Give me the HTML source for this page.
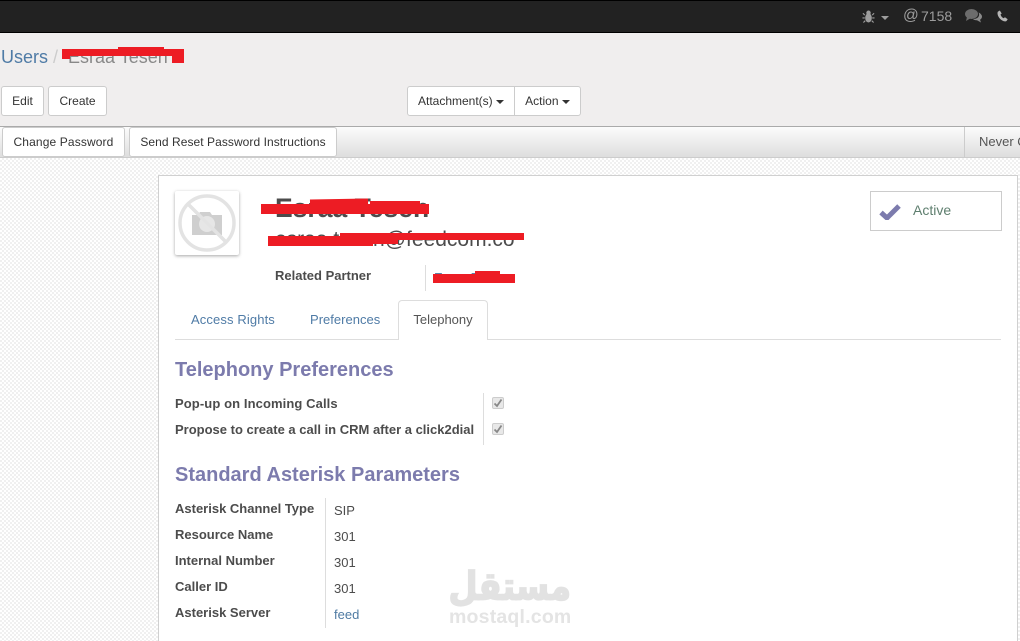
<!DOCTYPE html>
<html><head><meta charset="utf-8">
<style>
html,body{margin:0;padding:0;width:1020px;height:641px;overflow:hidden;background:#f0eeee}
body{position:relative;font-family:"Liberation Sans",Arial,sans-serif;font-size:12px;color:#4c4c4c}
.a{position:absolute;white-space:nowrap}
.btn{position:absolute;box-sizing:border-box;background:#fff;border:1px solid #ccc;height:30px;line-height:28px;text-align:center;font-size:12px;color:#333;border-radius:3px}
.car{display:inline-block;border-left:4px solid transparent;border-right:4px solid transparent;border-top:4px solid currentColor;vertical-align:middle;margin-left:0}
.lbl{position:absolute;left:175px;font-weight:bold;font-size:13px;color:#4c4c4c;white-space:nowrap;line-height:16px}
.val{position:absolute;left:334px;font-size:13px;color:#4c4c4c;line-height:16px}
.h{position:absolute;left:175px;font-weight:bold;font-size:20px;color:#7c7bad;white-space:nowrap;line-height:24px}
.red{position:absolute;background:#ed1c24}
.vl{position:absolute;width:1px;background:#ddd}
.cb{position:absolute;left:492px;width:10px;height:10px;border:1px solid #ccc;background:#e8e8e8;border-radius:2px}
</style></head><body>
<div class="a" style="left:0;top:0;width:1020px;height:33px;box-sizing:border-box;background:#222;border-top:1px solid #000;border-bottom:1px solid #000"></div>

<svg class="a" style="left:862px;top:9px" width="13" height="15" viewBox="0 0 14 15"><g fill="#9d9d9d" stroke="#9d9d9d"><ellipse cx="7" cy="9" rx="3.6" ry="5" stroke="none"/><circle cx="7" cy="3.5" r="2.4" stroke="none"/><path d="M3 6 1 4M11 6l2-2M3 9H0.5M11 9h2.5M3.5 12 1.5 14M10.5 12l2 2" fill="none" stroke-width="1.2"/></g></svg>
<div class="a" style="left:881px;top:16px;color:#9d9d9d"><span class="car" style="display:block;margin:0"></span></div>
<div class="a" style="left:903px;top:6px;font-size:15.500px;color:#9d9d9d;line-height:19px">@</div>
<div class="a" style="left:921px;top:8px;font-size:14px;color:#9d9d9d;line-height:17px">7158</div>
<svg class="a" style="left:965px;top:9px" width="17" height="14" viewBox="0 0 17 14"><ellipse cx="6.5" cy="5" rx="6.5" ry="5" fill="#6c6c6c"/><path d="M2 8 1 12l5-3z" fill="#6c6c6c"/><path d="M13.6 3.500C15.600 4.500 17 6 17 7.500c0 1.500-1 2.700-2 3.300l1 2.700-4-2.200c-1.500 0-3-.4-4-1.300 4 .2 7.500-2.500 5.600-6.500z" fill="#8a8a8a"/></svg>
<svg class="a" style="left:997px;top:10px" width="11" height="12" viewBox="0 0 11 12"><path d="M2.800.5.800 1.800C-.2 4 1.500 7.500 3.500 9.300c2 1.800 4.500 2.700 6 1.700l1.200-1.800-2.700-2-1.500 1C5 7.500 3.800 5.800 3.500 4.500l1.200-1z" fill="#b5b5b5"/></svg>

<div class="a" style="left:1px;top:45px;font-size:18px;line-height:24px;color:#4f7ba6">Users</div>
<div class="a" style="left:53px;top:45px;font-size:18px;line-height:24px;color:#ccc">/</div>
<div class="a" style="left:68px;top:45px;font-size:18px;line-height:24px;color:#888">Esraa Tesen</div>
<div class="red" style="left:62px;top:49px;width:122px;height:7px"></div>
<div class="red" style="left:62px;top:53px;width:8px;height:6px"></div>
<div class="red" style="left:172px;top:52px;width:12px;height:11px"></div>
<div class="red" style="left:118px;top:47px;width:46px;height:5px"></div>

<div class="btn" style="left:1px;top:86px;width:43px">Edit</div>
<div class="btn" style="left:48px;top:86px;width:59px">Create</div>
<div class="btn" style="left:407px;top:86px;width:108px;border-radius:3px 0 0 3px">Attachment(s) <span class="car"></span></div>
<div class="btn" style="left:514px;top:86px;width:67px;border-radius:0 3px 3px 0">Action <span class="car"></span></div>

<div class="a" style="left:0;top:126px;width:1020px;height:32px;box-sizing:border-box;border-top:1px solid #aaa;border-bottom:1px solid #ccc;background:linear-gradient(#fcfcfc,#dedede)"></div>
<div class="btn" style="left:2px;top:127px;width:123px;letter-spacing:.13px">Change Password</div>
<div class="btn" style="left:129px;top:127px;width:208px;letter-spacing:.06px">Send Reset Password Instructions</div>
<div class="vl" style="left:964px;top:127px;height:30px;background:#ccc"></div>
<div class="a" style="left:979px;top:134px;font-size:13px;line-height:15px;color:#555">Never Contact</div>

<div class="a" style="left:0;top:158px;width:1020px;height:483px;background-color:#fafafa;background-image:repeating-conic-gradient(#f0f0f0 0 25%,#fff 0 50%);background-size:4px 4px"></div>
<div class="a" style="left:158px;top:175px;width:860px;height:470px;box-sizing:border-box;background:#fff;border:1px solid #d0d0d0"></div>

<div class="a" style="left:175px;top:191px;width:64px;height:64px;background:#fff;border-radius:2px;box-shadow:0 1px 3px rgba(0,0,0,.35)"></div>
<svg class="a" style="left:175px;top:191px" width="64" height="64" viewBox="0 0 64 64">
<circle cx="32" cy="32" r="27" fill="none" stroke="#e3e3e3" stroke-width="3.500"/>
<path d="M17 24h6l2-3h10l2 3h10v20H17z" fill="#cfcfcf"/><circle cx="32" cy="33" r="8" fill="#e6e6e6"/>
<path d="M13 13 51 51" stroke="#e3e3e3" stroke-width="3.500"/></svg>

<div class="a" style="left:275px;top:192px;font-size:26.500px;font-weight:bold;line-height:32px;color:#4c4c4c">Esraa Tesen</div>
<div class="a" style="left:275px;top:227px;font-size:21px;line-height:26px;color:#4c4c4c">esraa.tesen@feedcom.co</div>
<div class="red" style="left:261px;top:204px;width:168px;height:10px"></div>
<div class="red" style="left:310px;top:199px;width:58px;height:6px;transform:rotate(-1deg)"></div>
<div class="red" style="left:370px;top:201px;width:50px;height:5px"></div>
<div class="red" style="left:268px;top:236px;width:105px;height:10px"></div>
<div class="red" style="left:340px;top:233px;width:184px;height:7px"></div>
<div class="red" style="left:368px;top:236px;width:30px;height:8px"></div>

<div class="lbl" style="top:268px;left:275px">Related Partner</div>
<div class="vl" style="left:425px;top:265px;height:26px"></div>
<div class="a" style="left:434px;top:270px;font-size:13px;line-height:16px;color:#5b83a8">Esraa T</div>
<div class="red" style="left:433px;top:274px;width:82px;height:9px"></div>
<div class="red" style="left:475px;top:271px;width:25px;height:4px"></div>

<div class="a" style="left:175px;top:339px;width:826px;height:1px;background:#ddd"></div>
<div class="a" style="left:191px;top:311px;font-size:13px;letter-spacing:.12px;line-height:17px;color:#4f7ba6">Access Rights</div>
<div class="a" style="left:310px;top:311px;font-size:13px;line-height:17px;letter-spacing:.02px;color:#4f7ba6">Preferences</div>
<div class="a" style="left:398px;top:300px;width:90px;height:40px;box-sizing:border-box;background:#fff;border:1px solid #ddd;border-bottom:none;border-radius:4px 4px 0 0;text-align:center;font-size:13px;line-height:37px;color:#555">Telephony</div>

<div class="h" style="top:358px">Telephony Preferences</div>
<div class="lbl" style="top:396px;letter-spacing:.1px">Pop-up on Incoming Calls</div>
<div class="lbl" style="top:422px">Propose to create a call in CRM after a click2dial</div>
<div class="vl" style="left:483px;top:393px;height:52px"></div>
<div class="cb" style="top:397px"></div>
<div class="cb" style="top:423px"></div>
<svg class="a" style="left:493px;top:398px" width="10" height="10" viewBox="0 0 10 10"><path d="M1.500 5.500 4 8l4.500-6.500" fill="none" stroke="#888" stroke-width="1.800"/></svg>
<svg class="a" style="left:493px;top:424px" width="10" height="10" viewBox="0 0 10 10"><path d="M1.500 5.500 4 8l4.500-6.500" fill="none" stroke="#888" stroke-width="1.800"/></svg>

<div class="h" style="top:463px">Standard Asterisk Parameters</div>
<div class="lbl" style="top:501px">Asterisk Channel Type</div>
<div class="lbl" style="top:527px">Resource Name</div>
<div class="lbl" style="top:553px">Internal Number</div>
<div class="lbl" style="top:579px">Caller ID</div>
<div class="lbl" style="top:605px">Asterisk Server</div>
<div class="vl" style="left:325px;top:498px;height:130px"></div>
<div class="val" style="top:503px">SIP</div>
<div class="val" style="top:529px">301</div>
<div class="val" style="top:555px">301</div>
<div class="val" style="top:581px">301</div>
<div class="val" style="top:607px;color:#4f7ba3">feed</div>

<div class="a" style="left:870px;top:191px;width:132px;height:40px;box-sizing:border-box;border:1px solid #ccc;background:#fff"></div>
<svg class="a" style="left:879px;top:203px" width="22" height="17" viewBox="0 0 22 17"><path d="M2 9.500 8 15 20 3" fill="none" stroke="#7c7bad" stroke-width="5"/></svg>
<div class="a" style="left:913px;top:202px;font-size:14px;line-height:17px;color:#5f7f6f">Active</div>

<div class="a" style="left:451px;top:562px;width:120px;text-align:center;font-family:'DejaVu Sans',sans-serif;font-weight:bold;font-size:33.500px;line-height:50px;color:#e2e2e2;-webkit-text-stroke:1.500px #e2e2e2;transform:scaleY(1.15)" dir="rtl">مستقل</div>
<div class="a" style="left:449px;top:605px;font-size:19.500px;line-height:24px;letter-spacing:.2px;font-weight:bold;color:#e4e4e4">mostaql.com</div>
</body></html>
